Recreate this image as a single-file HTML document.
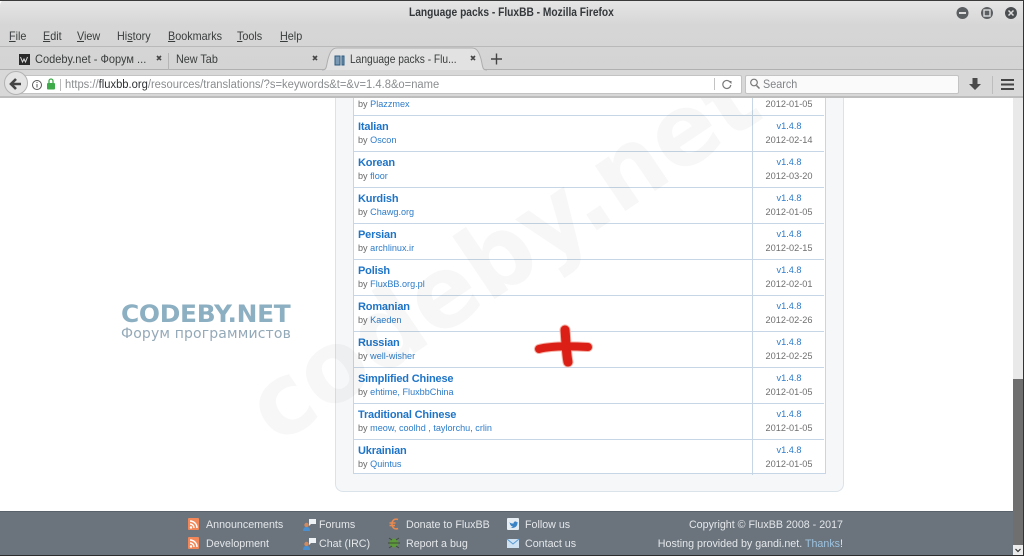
<!DOCTYPE html>
<html><head><meta charset="utf-8">
<style>
html,body{margin:0;padding:0;background:#fff}
body{width:1024px;height:556px;position:relative;overflow:hidden;font-family:"Liberation Sans",sans-serif}
.a{position:absolute;white-space:nowrap}
.t{font-size:12px;color:#3a3d3d;line-height:14px;transform-origin:left top;transform:scaleX(.9)}
u{text-decoration:underline}
.row{position:absolute;left:0;width:471px;height:36px;border-top:1px solid #c6d6e6;box-sizing:border-box}
.n{position:absolute;left:5px;top:5px;font-size:11px;font-weight:bold;color:#1e74c8;line-height:13px;letter-spacing:-.17px}
.by{position:absolute;left:5px;top:18px;font-size:9.1px;color:#6a6a6a;line-height:12px}
.by span{color:#2d7cc9}
.v{position:absolute;left:400px;width:72px;text-align:center;top:4px;font-size:9.2px;color:#2d7cc9;line-height:12px}
.d{position:absolute;left:400px;width:72px;text-align:center;top:18px;font-size:9.2px;color:#6f6f6f;line-height:12px}
.f{font-size:10.7px;color:#e4e7ea;line-height:13px}
</style></head>
<body>
<!-- page -->
<div class="a" style="left:0;top:96px;width:1013px;height:415px;background:#fff;overflow:hidden">
  <div class="a" style="left:335px;top:-10px;width:507px;height:405px;background:#f5f7f9;border:1px solid #dbe3ea;border-top:0;border-radius:0 0 8px 8px"></div>
  <div class="a" style="left:353px;top:-10px;width:473px;height:388px;background:#fff;border:1px solid #c6d6e6;border-top:0;box-sizing:border-box"></div>
</div>
<div class="a" style="left:352px;top:97px;width:473px;height:378px;">
  <div class="a" style="left:400px;top:0;width:1px;height:378px;background:#c6d6e6"></div>
  <div class="row" style="top:-18px;left:1px;border-top:1px solid transparent"><div class="by" style="left:5px">by <span>Plazzmex</span></div><div class="d">2012-01-05</div></div>
  <div class="row" style="top:18px;left:1px"><div class="n">Italian</div><div class="by">by <span>Oscon</span></div><div class="v">v1.4.8</div><div class="d">2012-02-14</div></div>
  <div class="row" style="top:54px;left:1px"><div class="n">Korean</div><div class="by">by <span>floor</span></div><div class="v">v1.4.8</div><div class="d">2012-03-20</div></div>
  <div class="row" style="top:90px;left:1px"><div class="n">Kurdish</div><div class="by">by <span>Chawg.org</span></div><div class="v">v1.4.8</div><div class="d">2012-01-05</div></div>
  <div class="row" style="top:126px;left:1px"><div class="n">Persian</div><div class="by">by <span>archlinux.ir</span></div><div class="v">v1.4.8</div><div class="d">2012-02-15</div></div>
  <div class="row" style="top:162px;left:1px"><div class="n">Polish</div><div class="by">by <span>FluxBB.org.pl</span></div><div class="v">v1.4.8</div><div class="d">2012-02-01</div></div>
  <div class="row" style="top:198px;left:1px"><div class="n">Romanian</div><div class="by">by <span>Kaeden</span></div><div class="v">v1.4.8</div><div class="d">2012-02-26</div></div>
  <div class="row" style="top:234px;left:1px"><div class="n">Russian</div><div class="by">by <span>well-wisher</span></div><div class="v">v1.4.8</div><div class="d">2012-02-25</div></div>
  <div class="row" style="top:270px;left:1px"><div class="n">Simplified Chinese</div><div class="by">by <span>ehtime, FluxbbChina</span></div><div class="v">v1.4.8</div><div class="d">2012-01-05</div></div>
  <div class="row" style="top:306px;left:1px"><div class="n">Traditional Chinese</div><div class="by">by <span>meow, coolhd , taylorchu, crlin</span></div><div class="v">v1.4.8</div><div class="d">2012-01-05</div></div>
  <div class="row" style="top:342px;left:1px"><div class="n">Ukrainian</div><div class="by">by <span>Quintus</span></div><div class="v">v1.4.8</div><div class="d">2012-01-05</div></div>
</div>
<!-- watermark -->
<svg class="a" style="left:0;top:96px;pointer-events:none" width="1013" height="415">
  <text x="0" y="0" transform="translate(277,350) rotate(-34)" font-family="DejaVu Sans" font-weight="bold" font-size="100" fill="#000" fill-opacity=".032" textLength="590" lengthAdjust="spacingAndGlyphs">codeby.net</text>
</svg>
<!-- logo -->
<div class="a" style="left:121px;top:298px;font-family:'DejaVu Sans',sans-serif;font-size:24px;font-weight:bold;color:#8cafc2;letter-spacing:-.3px;line-height:32px;transform-origin:left top;transform:scaleX(1.035)">CODEBY.NET</div>
<div class="a" style="left:121px;top:326px;font-family:'DejaVu Sans',sans-serif;font-size:14px;color:#94a9b8;line-height:16px;letter-spacing:.15px">Форум программистов</div>
<!-- red plus -->
<svg class="a" style="left:525px;top:320px" width="80" height="50">
  <path d="M14 29 C25 26 45 26 63 27" stroke="#f3b3a8" stroke-width="10" stroke-linecap="round" fill="none"/>
  <path d="M40 10 C41 20 41 32 43 42" stroke="#f3b3a8" stroke-width="11" stroke-linecap="round" fill="none"/>
  <path d="M14 29 C25 26 45 26 63 27" stroke="#dc1f16" stroke-width="8" stroke-linecap="round" fill="none"/>
  <path d="M40 10 C41 20 41 32 43 42" stroke="#dc1f16" stroke-width="9" stroke-linecap="round" fill="none"/>
</svg>
<!-- footer -->
<div class="a" style="left:0;top:511px;width:1013px;height:44px;background:#6b747d;border-top:1px solid #59626b;box-sizing:border-box"></div>
<svg class="a" style="left:187px;top:517px" width="350" height="36">
  <g><rect x="1" y="1" width="11" height="12" rx="1" fill="#f2885a"/><path d="M3 4a7 7 0 0 1 7 7M3 7a4 4 0 0 1 4 4" stroke="#fff" stroke-width="1.4" fill="none"/><circle cx="4" cy="10.500" r="1.200" fill="#fff"/></g>
  <g transform="translate(0,19)"><rect x="1" y="1" width="11" height="12" rx="1" fill="#f2885a"/><path d="M3 4a7 7 0 0 1 7 7M3 7a4 4 0 0 1 4 4" stroke="#fff" stroke-width="1.400" fill="none"/><circle cx="4" cy="10.500" r="1.200" fill="#fff"/></g>
  <g transform="translate(115,0)"><path d="M7 2h7v5H9l-2 2z" fill="#eef2f5"/><circle cx="4.500" cy="8" r="2.200" fill="#d08a60"/><path d="M1 14c0-3 1.500-4 3.500-4s3.500 1 3.500 4z" fill="#4a8fd0"/></g>
  <g transform="translate(115,19)"><path d="M7 2h7v5H9l-2 2z" fill="#eef2f5"/><circle cx="4.500" cy="8" r="2.200" fill="#d08a60"/><path d="M1 14c0-3 1.500-4 3.500-4s3.500 1 3.500 4z" fill="#4a8fd0"/></g>
  <path d="M211 2.500c-4-1.500-6 1.500-6 4.500s2 6 6 4.500M202.500 6h6M202.500 8.500h5.500" stroke="#e98a50" stroke-width="1.500" fill="none"/>
  <g transform="translate(0,19)"><ellipse cx="207" cy="7" rx="4.500" ry="4.500" fill="#5d9a3c"/><path d="M202 2l3 2M212 2l-3 2M201 7h12M202 12l3-2M212 12l-3-2" stroke="#3e4a38" stroke-width="1"/></g>
  <rect x="320" y="1" width="12" height="12" rx="1" fill="#e6eef4"/>
  <path d="M322 5c2 1.500 3 1.500 4.500 1.500 0-2 2.500-3 3.500-1l1.200-.3-.8 1.300c0 3-3 5-7 4.300 1.200-.2 2-.6 2.500-1.200-2-.3-3-2-3.400-4.600z" fill="#3a84c6"/>
  <rect x="320" y="22" width="12" height="9" fill="#cfe2f3"/><path d="M320 22l6 5 6-5" stroke="#5a9bd4" fill="none"/>
</svg>
<div class="a f" style="left:206px;top:519px">Announcements</div>
<div class="a f" style="left:206px;top:538px">Development</div>
<div class="a f" style="left:319px;top:519px">Forums</div>
<div class="a f" style="left:319px;top:538px">Chat (IRC)</div>
<div class="a f" style="left:406px;top:519px">Donate to FluxBB</div>
<div class="a f" style="left:406px;top:538px">Report a bug</div>
<div class="a f" style="left:525px;top:519px">Follow us</div>
<div class="a f" style="left:525px;top:538px">Contact us</div>
<div class="a f" style="right:181px;top:519px">Copyright © FluxBB 2008 - 2017</div>
<div class="a f" style="right:181px;top:538px">Hosting provided by gandi.net. <span style="color:#9cc3e0">Thanks</span>!</div>
<!-- scrollbar -->
<div class="a" style="left:1013px;top:96px;width:10px;height:459px;background:#e9e9e9"></div>
<div class="a" style="left:1013px;top:379px;width:10px;height:166px;background:#6f6f6f"></div>
<div class="a" style="left:1013px;top:545px;width:10px;height:10px;background:#ececec"></div>
<svg class="a" style="left:1013px;top:545px" width="10" height="10"><path d="M2.500 4l2.500 2.500L7.500 4" stroke="#333" stroke-width="1.200" fill="none"/></svg>
<!-- chrome -->
<div class="a" style="left:0;top:0;width:1024px;height:96px;background:linear-gradient(#e6e6e6 0,#d6d6d6 25px,#d3d3d3 96px);border-radius:5px 5px 0 0"></div>
<div class="a" style="left:0;top:0;width:1024px;height:1px;background:#3a3a3a"></div>
<div class="a" style="left:0;top:46px;width:1024px;height:1px;background:#b9b9b9"></div>
<div class="a" style="left:0;top:69px;width:1024px;height:1px;background:#b0b0b0"></div>
<div class="a" style="left:0;top:70px;width:1024px;height:26px;background:#d8d8d8"></div>
<div class="a" style="left:0;top:96px;width:1024px;height:2px;background:#bdbdbd"></div>
<div class="a" style="left:409px;top:6px;font-size:11.5px;line-height:14px;font-weight:bold;color:#33373a;transform-origin:left top;transform:scaleX(.888)">Language packs - FluxBB - Mozilla Firefox</div>
<svg class="a" style="left:950px;top:4px" width="74" height="18">
  <circle cx="12.500" cy="9" r="6" fill="#5c5f62"/><rect x="9" y="8" width="7" height="2" fill="#ddd"/>
  <circle cx="37" cy="9" r="6" fill="#5c5f62"/><rect x="34" y="6" width="6" height="6" fill="none" stroke="#ddd" stroke-width="1.400"/>
  <circle cx="61" cy="9" r="6" fill="#4b4e51"/><path d="M58.500 6.500l5 5M63.500 6.500l-5 5" stroke="#ddd" stroke-width="1.500"/>
</svg>
<div class="a t" style="left:9px;top:29px"><u>F</u>ile</div>
<div class="a t" style="left:43px;top:29px"><u>E</u>dit</div>
<div class="a t" style="left:77px;top:29px"><u>V</u>iew</div>
<div class="a t" style="left:117px;top:29px">Hi<u>s</u>tory</div>
<div class="a t" style="left:168px;top:29px"><u>B</u>ookmarks</div>
<div class="a t" style="left:237px;top:29px"><u>T</u>ools</div>
<div class="a t" style="left:280px;top:29px"><u>H</u>elp</div>
<!-- tabs -->
<svg class="a" style="left:0;top:46px" width="520" height="26">
  <path d="M322 24c5 0 4-3 6-11 2-7 4-11 9-11h135c5 0 7 4 9 11 2 8 1 11 6 11" fill="#e2e2e2" stroke="#adadad"/>
  <rect x="19" y="8" width="11" height="11" fill="#2a2a2a"/><path d="M20.500 11l2 5 1.500-3 1.500 3 2-5" stroke="#ddd" fill="none"/>
  <rect x="168" y="7" width="1" height="17" fill="#b5b5b5"/>
  <path d="M157 10l4 4M161 10l-4 4M313 10l4 4M317 10l-4 4M471 10l4 4M475 10l-4 4" stroke="#444" stroke-width="1.600"/>
  <path d="M335 10h5v9h-5zM342 10h2v9h-2z" fill="#7a99b5" stroke="#2d5a80" stroke-width="1"/>
  <path d="M491 13h11M496.500 7.500v11" stroke="#444" stroke-width="1.400"/>
</svg>
<div class="a t" style="left:35px;top:52px;transform:scaleX(.92)">Codeby.net - Форум ...</div>
<div class="a t" style="left:176px;top:52px">New Tab</div>
<div class="a t" style="left:350px;top:52px;transform:scaleX(.85)">Language packs - Flu...</div>
<!-- url bar -->
<div class="a" style="left:18px;top:75px;width:722px;height:17px;background:#fff;border:1px solid #c3c3c3;border-radius:2px;box-sizing:content-box"></div>
<div class="a" style="left:745px;top:75px;width:212px;height:17px;background:#fafafa;border:1px solid #c3c3c3;border-radius:2px"></div>
<div class="a" style="left:4px;top:71px;width:22px;height:22px;border-radius:50%;background:#e4e4e4;border:1px solid #b2b2b2"></div>
<svg class="a" style="left:0;top:70px" width="70" height="26">
  <path d="M21 14h-9M16 9l-5 5 5 5" stroke="#444" stroke-width="2.600" fill="none"/>
  <circle cx="37" cy="15" r="4.500" fill="none" stroke="#555"/><path d="M37 14v3.500M37 12v1" stroke="#555"/>
  <rect x="47" y="13" width="8" height="6.500" rx="1" fill="#3eab4a"/><path d="M49 13v-2a2 2 0 0 1 4 0v2" fill="none" stroke="#3eab4a" stroke-width="1.300"/>
  <rect x="60" y="9" width="1" height="12" fill="#bbb"/>
</svg>
<div class="a" style="left:65px;top:78px;font-size:11.5px;line-height:14px;color:#8a8d8f;transform-origin:left top;transform:scaleX(.974)">https://<span style="color:#2f3234">fluxbb.org</span>/resources/translations/?s=keywords&amp;t=&amp;v=1.4.8&amp;o=name</div>
<svg class="a" style="left:709px;top:72px" width="50" height="24">
  <rect x="5" y="6" width="1" height="12" fill="#c3c3c3"/>
  <path d="M21 10a4 4 0 1 0 .8 3" fill="none" stroke="#7a7a7a" stroke-width="1.200"/><path d="M19 9h3.500v3z" fill="#7a7a7a"/>
</svg>
<svg class="a" style="left:748px;top:76px" width="18" height="18"><circle cx="6" cy="6.500" r="3.300" fill="none" stroke="#777" stroke-width="1.200"/><path d="M8.500 9.500l3 3" stroke="#777" stroke-width="1.500"/></svg>
<div class="a t" style="left:763px;top:77px;color:#808386">Search</div>
<svg class="a" style="left:965px;top:74px" width="59" height="22">
  <path d="M7.500 4h5v6h3.500L10 16 4 10h3.500z" fill="#4a4a4a"/>
  <rect x="27" y="2" width="1" height="18" fill="#bdbdbd"/>
  <path d="M36 6h13M36 10.500h13M36 15h13" stroke="#444" stroke-width="2"/>
</svg>
<!-- window edge -->
<div class="a" style="left:1023px;top:0;width:1px;height:556px;background:#333"></div>
<div class="a" style="left:0;top:555px;width:1024px;height:1px;background:#2d2d2d"></div>
</body></html>
